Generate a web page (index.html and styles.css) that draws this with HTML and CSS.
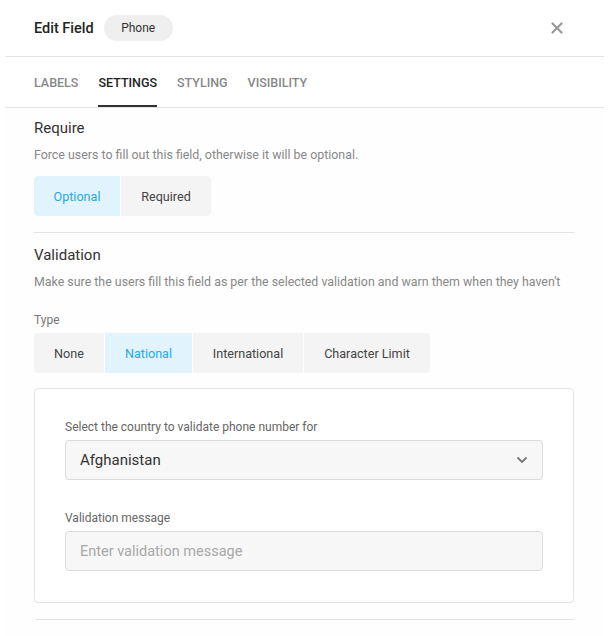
FILE: index.html
```html
<!DOCTYPE html>
<html>
<head>
<meta charset="utf-8">
<link rel="stylesheet" href="styles.css">
</head>
<body>
<div class="panel">
  <header class="head">
    <div class="title">Edit Field</div>
    <span class="pill">Phone</span>
    <button class="close" aria-label="Close">
      <svg width="12" height="12" viewBox="0 0 12 12"><path d="M1.5 1.5L10.5 10.5M10.5 1.5L1.5 10.5" stroke="#9a9a9a" stroke-width="2.2" stroke-linecap="round"/></svg>
    </button>
  </header>
  <nav class="tabs">
    <span class="tab">LABELS</span>
    <span class="tab active">SETTINGS</span>
    <span class="tab">STYLING</span>
    <span class="tab">VISIBILITY</span>
  </nav>
  <main class="body">
    <section class="sec">
      <h3 class="h">Require</h3>
      <p class="desc">Force users to fill out this field, otherwise it will be optional.</p>
      <div class="seg">
        <span class="opt on w-opt">Optional</span>
        <span class="opt w-req">Required</span>
      </div>
    </section>
    <hr class="div">
    <section class="sec">
      <h3 class="h h2">Validation</h3>
      <p class="desc">Make sure the users fill this field as per the selected validation and warn them when they haven't</p>
      <div class="lbl">Type</div>
      <div class="seg">
        <span class="opt w-none">None</span>
        <span class="opt on w-nat">National</span>
        <span class="opt w-int">International</span>
        <span class="opt w-chr">Character Limit</span>
      </div>
      <div class="box">
        <div class="field">
          <div class="flbl">Select the country to validate phone number for</div>
          <div class="select">
            <span>Afghanistan</span>
            <svg width="12" height="8" viewBox="0 0 12 8"><path d="M1.5 1.5L6 6L10.5 1.5" fill="none" stroke="#777" stroke-width="1.8"/></svg>
          </div>
        </div>
        <div class="field">
          <div class="flbl">Validation message</div>
          <div class="input">Enter validation message</div>
        </div>
      </div>
    </section>
    <hr class="div last">
  </main>
</div>
</body>
</html>
```
FILE: styles.css
```css
* { box-sizing: border-box; }
html, body { margin: 0; padding: 0; background: #fff; }
body { font-family: Roboto, "Liberation Sans", sans-serif; color: #333; }
.panel { margin: 0 6px 0 5px; background: #fefefe; min-height: 636px; }
.head {
  display: flex; align-items: center; height: 57px;
  padding: 0 0 0 29px; border-bottom: 1px solid #e3e3e3; background: #fff;
}
.title { font-size: 14.5px; font-weight: 500; color: #222; }
.pill {
  margin-left: 10px; background: #efefef; border-radius: 13px;
  height: 26px; width: 69px; display: flex; align-items: center; justify-content: center;
  font-size: 12px; color: #333;
}
.close {
  margin-left: auto; margin-right: 41px; border: 0; background: none; padding: 0;
  width: 12px; height: 12px; display: flex;
}
.tabs {
  display: flex; padding-left: 29px; height: 51px;
  border-bottom: 1px solid #e3e3e3; background: #fff;
}
.tab {
  font-size: 12.5px; font-weight: 500; color: #888; display: flex; align-items: center;
  margin-right: 20px; border-bottom: 2px solid transparent; padding-top: 2px;
}
.tab.active { color: #222; border-bottom-color: #333; }
.body { padding: 0 30px 0 29px; }
.h { margin: 0; font-size: 15px; font-weight: 400; color: #333; padding-top: 11px; line-height: 18px; }
.h2 { padding-top: 12px; }
.desc { margin: 10px 0 0; font-size: 12.4px; color: #888; line-height: 15px; }
.seg { display: flex; gap: 1px; margin-top: 14px; }
.opt {
  height: 40px; display: flex; align-items: center; justify-content: center;
  background: #f4f4f4; font-size: 12.6px; font-weight: 400; color: #444;
}
.opt:first-child { border-radius: 4px 0 0 4px; }
.opt:last-child { border-radius: 0 4px 4px 0; }
.opt.on { background: #e1f4fd; color: #2aa7e4; }
.w-opt { width: 86px; } .w-req { width: 90px; }
.w-none { width: 70px; } .w-nat { width: 87px; } .w-int { width: 110px; } .w-chr { width: 126px; }
.div { border: 0; border-top: 1px solid #e3e3e3; margin: 16px 0 1px; }
.lbl { font-size: 12px; color: #777; margin-top: 24px; line-height: 14px; }
.seg + .box { margin-top: 15px; }
.lbl + .seg { margin-top: 6px; }
.box {
  border: 1px solid #e3e3e3; border-radius: 4px; background: #fff;
  padding: 31px 30px 31px; display: flex; flex-direction: column; gap: 31px;
}
.flbl { font-size: 12px; color: #666; line-height: 14px; margin-bottom: 6px; }
.select, .input {
  height: 40px; border: 1px solid #dcdcdc; border-radius: 4px; background: #f7f7f7;
  display: flex; align-items: center; padding: 0 14px; font-size: 15px;
}
.select { justify-content: space-between; color: #333; }
.input { color: #a8a8a8; font-size: 14.5px; }
.div.last { margin-top: 16px; margin-left: 2px; }
```
